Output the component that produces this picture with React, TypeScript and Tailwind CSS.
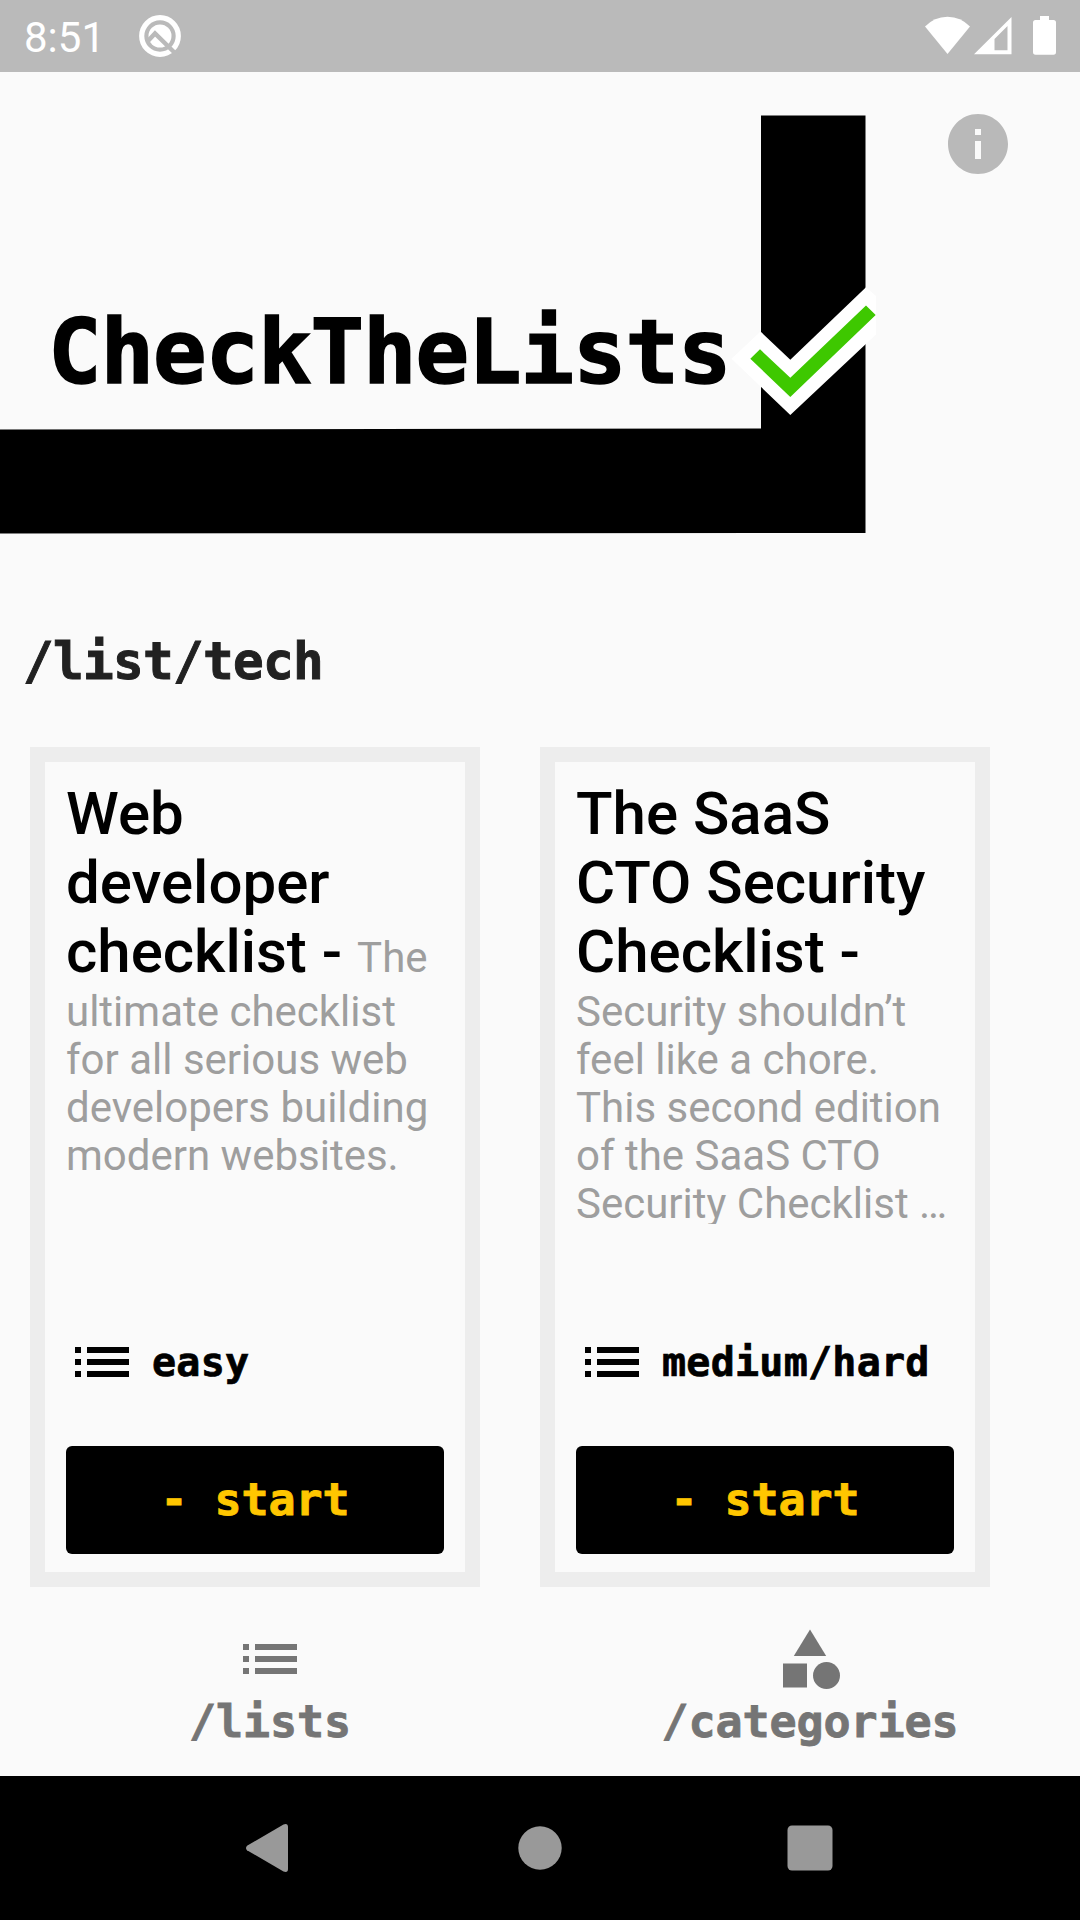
import React from 'react';

const MONO =
  "font-['DejaVu_Sans_Mono',monospace] font-bold whitespace-pre [-webkit-text-stroke:0.018em_currentColor]";

function ListIcon() {
  return (
    <svg className="size-[72px] shrink-0" viewBox="0 0 24 24" fill="currentColor">
      <path d="M3 13h2v-2H3v2zm0 4h2v-2H3v2zm0-8h2V7H3v2zm4 4h14v-2H7v2zm0 4h14v-2H7v2zM7 7v2h14V7H7z" />
    </svg>
  );
}

function CategoryIcon() {
  return (
    <svg className="size-[72px] shrink-0" viewBox="0 0 24 24" fill="currentColor">
      <path d="M12 2.15 6.6 11h10.8z" />
      <circle cx="17.5" cy="17.5" r="4.5" />
      <path d="M3 13.5h8v8H3z" />
    </svg>
  );
}

function StatusBar() {
  return (
    <div className="flex h-[72px] shrink-0 items-center bg-[#bababa] pl-6 pr-6 text-white">
      <span className="w-[112px] pt-[3px] text-[42px] leading-none">8:51</span>
      <svg className="size-12" viewBox="136 12 48 48" fill="none">
        <circle cx="160" cy="36" r="18.3" stroke="#fff" strokeWidth="5.2" />
        <circle cx="160" cy="36" r="11.5" fill="#fff" />
        <path d="M147.500 41.500l7.500-8 22 21.500" stroke="#bababa" strokeWidth="4.4" />
      </svg>
      <svg className="ml-auto h-[48px] w-[136px]" viewBox="920 12 136 48" fill="#fff">
        <path d="M925 26.5Q934 17 947.500 16.700Q961 17 970 26.500L947.500 54z" />
        <path fillRule="evenodd" d="M974 54.300 1011.500 17V54.300zM994.500 50.300H1007.500V26L994.500 39z" />
        <path d="M1040 16h9v4h4.500q2.500 0 2.500 2.500v29.500q0 2.700-2.500 2.700h-18q-2.500 0-2.500-2.700v-29.500q0-2.500 2.500-2.500h4.500z" />
      </svg>
    </div>
  );
}

function Header() {
  return (
    <header className="relative flex h-[516px] shrink-0 items-start justify-end pr-[66px] pt-9">
      <svg className="absolute left-0 top-0 h-[516px] w-[900px]" viewBox="0 72 900 516">
        <path d="M761 115.500H865.500V533L0 533.500V429.500L761 428.500z" />
        <path d="M731.500 358.700 760.500 331.500 790.300 359.700 866 287.300 876 296V334.500L790.300 415z" fill="#fff" />
        <path d="M750.300 358.700 760 349.300 790.300 377.700 866 305.500 875.700 315 790.300 397z" fill="#3ec800" />
      </svg>
      <h1 className={`${MONO} absolute left-[48px] top-[228px] text-[89px] leading-[104px] tracking-[-1.08px]`}>
        CheckTheLists
      </h1>
      <svg className="size-[72px]" viewBox="0 0 24 24" fill="#b9b9b9">
        <path d="M12 2C6.480 2 2 6.480 2 12s4.480 10 10 10 10-4.480 10-10S17.520 2 12 2zm1 15h-2v-6h2v6zm0-8h-2V7h2v2z" />
      </svg>
    </header>
  );
}

interface CardProps {
  title: string[];
  text: React.ReactNode;
  inline?: string;
  level: string;
}

function Card({ title, text, inline, level }: CardProps) {
  return (
    <article className="flex h-[840px] w-[450px] flex-col border-[15px] border-[#ededed] px-[21px] pt-[17px]">
      <div className="h-[445px] overflow-hidden whitespace-nowrap">
        <h3 className="text-[60px] font-medium leading-[69px] text-black">
          {title.map((line, i) => (
            <span key={line} className="block">
              {line}
              {inline && i === title.length - 1 && (
                <>
                  {' '}
                  <span className="text-[42px] font-normal leading-none text-[#9e9e9e]">{inline}</span>
                </>
              )}
            </span>
          ))}
        </h3>
        <p className="pt-0.5 text-[42px] leading-[48px] text-[#9e9e9e]">{text}</p>
      </div>
      <div className="mt-[102px] flex h-[72px] items-center text-black">
        <ListIcon />
        <span className={`${MONO} ml-[14px] text-[40px] leading-[48px] tracking-[0.25px]`}>{level}</span>
      </div>
      <button className="mt-12 flex h-[108px] shrink-0 items-center justify-center rounded-md bg-black text-[#ffc600]">
        <span className={`${MONO} text-[45px] leading-[54px] tracking-[-0.09px]`}>- start</span>
      </button>
    </article>
  );
}

function Tab({ icon, label }: { icon: React.ReactNode; label: string }) {
  return (
    <div className="flex flex-1 flex-col items-center pt-9 text-[#757575]">
      {icon}
      <span className={`${MONO} text-[45px] leading-[54px] tracking-[-0.09px]`}>{label}</span>
    </div>
  );
}

export default function App() {
  return (
    <div className="flex h-[1920px] w-[1080px] flex-col overflow-hidden bg-[#fafafa] font-[Roboto,sans-serif] text-black">
      <StatusBar />
      <Header />
      <h2 className={`${MONO} mt-[44px] h-[60px] shrink-0 pl-[23px] text-[51px] leading-[60px] tracking-[-0.7px] text-[#212121]`}>
        /list/tech
      </h2>
      <main className="flex shrink-0 gap-[60px] pl-[30px] pt-[55px]">
        <Card
          title={['Web', 'developer', 'checklist -']}
          inline="The"
          text={<>ultimate checklist<br />for all serious web<br />developers building<br />modern websites.</>}
          level="easy"
        />
        <Card
          title={['The SaaS', 'CTO Security', 'Checklist -']}
          text={<>Security shouldn’t<br />feel like a chore.<br />This second edition<br />of the SaaS CTO<br />Security Checklist …</>}
          level="medium/hard"
        />
      </main>
      <nav className="flex h-[189px] shrink-0">
        <Tab icon={<ListIcon />} label="/lists" />
        <Tab icon={<CategoryIcon />} label="/categories" />
      </nav>
      <footer className="flex h-36 shrink-0 items-center justify-center gap-[198px] bg-black">
        <svg className="size-[72px]" viewBox="234 1812 72 72" fill="#999">
          <path d="M247 1845.700 283.500 1824.500Q288 1823 288 1827V1869Q288 1873 283.500 1871.500L247 1850.300Q245 1848 247 1845.700z" />
        </svg>
        <svg className="size-[72px]" viewBox="0 0 72 72" fill="#999"><circle cx="36" cy="36" r="21.700" /></svg>
        <svg className="size-[72px]" viewBox="0 0 72 72" fill="#999"><rect x="13.500" y="13.500" width="45" height="45" rx="4.500" /></svg>
      </footer>
    </div>
  );
}
